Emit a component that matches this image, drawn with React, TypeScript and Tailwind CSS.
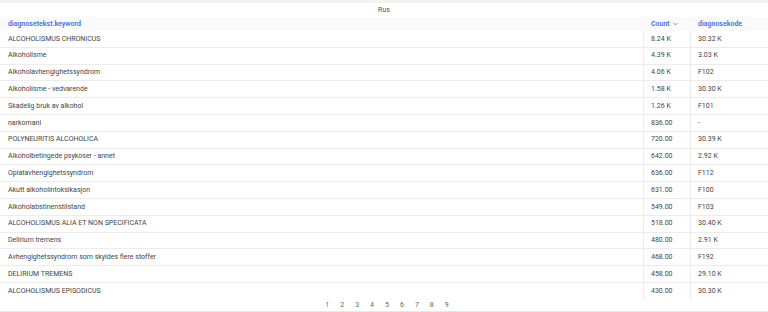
import React from 'react';

const rows: [string, string, string][] = [
  ['ALCOHOLISMUS CHRONICUS', '8.24 K', '30.32 K'],
  ['Alkoholisme', '4.39 K', '3.03 K'],
  ['Alkoholavhengighetssyndrom', '4.06 K', 'F102'],
  ['Alkoholisme - vedvarende', '1.58 K', '30.30 K'],
  ['Skadelig bruk av alkohol', '1.26 K', 'F101'],
  ['narkomani', '836.00', '-'],
  ['POLYNEURITIS ALCOHOLICA', '720.00', '30.39 K'],
  ['Alkoholbetingede psykoser - annet', '642.00', '2.92 K'],
  ['Opiatavhengighetssyndrom', '636.00', 'F112'],
  ['Akutt alkoholintoksikasjon', '631.00', 'F100'],
  ['Alkoholabstinenstilstand', '549.00', 'F103'],
  ['ALCOHOLISMUS ALIA ET NON SPECIFICATA', '518.00', '30.40 K'],
  ['Delirium tremens', '480.00', '2.91 K'],
  ['Avhengighetssyndrom som skyldes flere stoffer', '468.00', 'F192'],
  ['DELIRIUM TREMENS', '458.00', '29.10 K'],
  ['ALCOHOLISMUS EPISODICUS', '430.00', '30.30 K'],
];

const pages = ['1', '2', '3', '4', '5', '6', '7', '8', '9'];

export default function App() {
  return (
    <div className="w-[768px] h-[312px] bg-white overflow-hidden text-[7px] text-[#444] font-['Roboto',sans-serif]">
      <div className="h-[3px] bg-[#f3f3f3]" />
      <div className="h-[14px] flex items-center justify-center text-[#555]">Rus</div>

      <div className="grid grid-cols-[643px_47px_1fr] h-[14px] bg-[#fafafa] font-semibold text-[#3b74e0] items-center">
        <div className="pl-[8px]">diagnosetekst.keyword</div>
        <div className="pl-[8px] flex items-center gap-[3px]">
          Count
          <svg width="5" height="4" viewBox="0 0 8 5" fill="none" stroke="#3b74e0" strokeWidth="1.2">
            <path d="M1 1l3 3 3-3" />
          </svg>
        </div>
        <div className="pl-[8px]">diagnosekode</div>
      </div>

      <div className="h-[269px]">
        {rows.map(([k, c, d], i) => (
          <div
            key={i}
            className={`grid grid-cols-[643px_47px_1fr] h-[16.8px] items-center ${i < rows.length - 1 ? 'border-b border-[#ececec]' : ''}`}
          >
            <div className="pl-[8px] h-full flex items-center">{k}</div>
            <div className="pl-[7px] h-full flex items-center border-l border-[#ececec]">{c}</div>
            <div className="pl-[7px] h-full flex items-center border-l border-[#ececec]">{d}</div>
          </div>
        ))}
      </div>

      <div className="h-[12px] flex flex-col">
        <div className="flex-1 flex items-center justify-center pl-[6px]">
          <div className="flex gap-[11px] text-[#666] leading-none">
            {pages.map((p) => (
              <span key={p} className={p === '1' ? 'text-[#3b74e0]' : ''}>
                {p}
              </span>
            ))}
          </div>
        </div>
        <div className="h-[1px] bg-[#e8e8e8]" />
      </div>
    </div>
  );
}
